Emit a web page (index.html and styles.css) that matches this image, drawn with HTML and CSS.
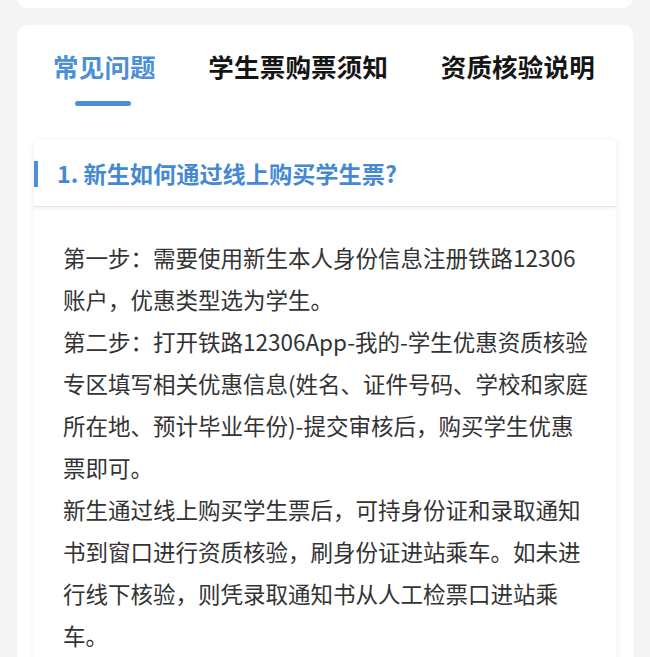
FILE: index.html
```html
<!DOCTYPE html>
<html lang="zh-CN">
<head>
<meta charset="utf-8">
<title>学生票</title>
<link rel="stylesheet" href="styles.css">
</head>
<body>
<div class="page">
  <div class="card card-top"></div>
  <div class="card card-main">
    <div class="tabs">
      <div class="tab active">常见问题<span class="tab-line"></span></div>
      <div class="tab">学生票购票须知</div>
      <div class="tab">资质核验说明</div>
    </div>
    <div class="qa">
      <div class="qa-head">
        <span class="qa-bar"></span>
        <span class="qa-title">1. 新生如何通过线上购买学生票?</span>
      </div>
      <div class="qa-body">
        <p>第一步：需要使用新生本人身份信息注册铁路12306账户，优惠类型选为学生。</p>
        <p>第二步：打开铁路12306App-我的-学生优惠资质核验专区填写相关优惠信息(姓名、证件号码、学校和家庭所在地、预计毕业年份)-提交审核后，购买学生优惠票即可。</p>
        <p>新生通过线上购买学生票后，可持身份证和录取通知书到窗口进行资质核验，刷身份证进站乘车。如未进行线下核验，则凭录取通知书从人工检票口进站乘车。</p>
      </div>
    </div>
  </div>
</div>
</body>
</html>
```
FILE: styles.css
```css
* { box-sizing: border-box; }
html, body {
  margin: 0;
  padding: 0;
  background: #f4f4f4;
  font-family: "Noto Sans CJK SC", "Noto Sans", sans-serif;
}
.page {
  padding: 0 17px;
  height: 657px;
  overflow: hidden;
}
.card {
  background: #ffffff;
  border-radius: 10px;
}
.card-top {
  height: 38px;
  margin-top: -30px;
}
.card-main {
  margin-top: 17px;
  padding: 0 17px 40px;
}
.tabs {
  display: flex;
  gap: 52.5px;
  padding: 24px 0 0 19px;
}
.tab {
  position: relative;
  font-size: 25.5px;
  line-height: 34px;
  font-weight: 700;
  color: #151515;
  letter-spacing: 0.2px;
  height: 82px;
}
.tab.active {
  color: #4b8fd6;
}
.tab-line {
  position: absolute;
  left: 50%;
  top: 52px;
  width: 56px;
  height: 5px;
  margin-left: -29px;
  border-radius: 3px;
  background: #4b8fd6;
}
.qa {
  margin-top: 9px;
  background: #ffffff;
  border-radius: 6px 6px 0 0;
  box-shadow: 0 0 8px rgba(0, 0, 0, 0.06);
}
.qa-head {
  height: 67px;
  display: flex;
  align-items: center;
  border-bottom: 1px solid #e4e4e4;
  box-shadow: 0 2px 3px rgba(0, 0, 0, 0.05);
}
.qa-bar {
  width: 4px;
  height: 26px;
  margin-top: 2px;
  background: #4b8fd6;
}
.qa-title {
  margin-left: 19px;
  font-size: 23.2px;
  font-weight: 700;
  color: #4489d2;
}
.qa-body {
  padding: 29px 25px 10px 29px;
}
.qa-body p {
  margin: 0;
  font-size: 22.5px;
  line-height: 42px;
  color: #333333;
}
```
